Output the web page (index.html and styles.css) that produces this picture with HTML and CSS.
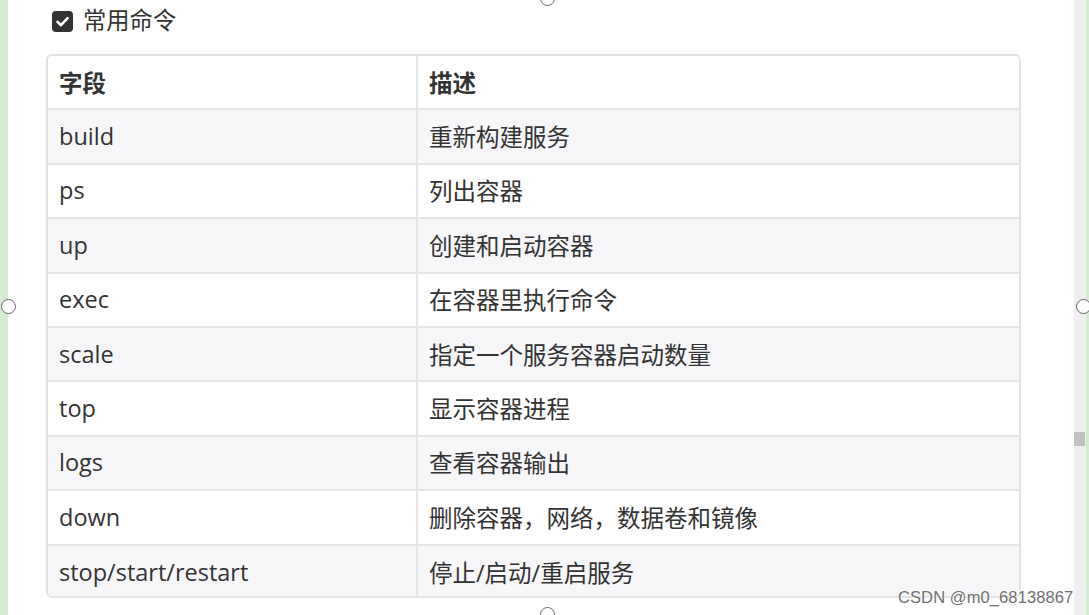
FILE: index.html
```html
<!DOCTYPE html>
<html lang="zh">
<head>
<meta charset="utf-8">
<link rel="stylesheet" href="styles.css">
</head>
<body>
<div class="frame">
  <div class="edge edge-left"></div>
  <main class="content">
    <div class="task">
      <span class="checkbox">
        <svg viewBox="0 0 21 21" width="21" height="21"><rect x="0" y="0" width="21" height="21" rx="4" fill="#333"/><path d="M5.5 10.8 L9 14.2 L15.6 7.2" fill="none" stroke="#fff" stroke-width="2.6" stroke-linecap="round" stroke-linejoin="round"/></svg>
      </span>
      <span class="task-label">常用命令</span>
    </div>
    <div class="table">
      <div class="cell head">字段</div><div class="cell head col2">描述</div>
      <div class="cell odd">build</div><div class="cell odd col2">重新构建服务</div>
      <div class="cell">ps</div><div class="cell col2">列出容器</div>
      <div class="cell odd">up</div><div class="cell odd col2">创建和启动容器</div>
      <div class="cell">exec</div><div class="cell col2">在容器里执行命令</div>
      <div class="cell odd">scale</div><div class="cell odd col2">指定一个服务容器启动数量</div>
      <div class="cell">top</div><div class="cell col2">显示容器进程</div>
      <div class="cell odd">logs</div><div class="cell odd col2">查看容器输出</div>
      <div class="cell">down</div><div class="cell col2">删除容器，网络，数据卷和镜像</div>
      <div class="cell odd last">stop/start/restart</div><div class="cell odd col2 last">停止/启动/重启服务</div>
    </div>
  </main>
  <div class="scrollbar"><div class="thumb"></div></div>
  <div class="edge edge-right"></div>
  <span class="handle h-top"></span>
  <span class="handle h-left"></span>
  <span class="handle h-right"></span>
  <span class="handle h-bottom"></span>
  <span class="mark">CSDN @m0_68138867</span>
</div>
</body>
</html>
```
FILE: styles.css
```css
html, body {
  margin: 0;
  padding: 0;
  background: #fff;
}
.frame {
  position: relative;
  width: 1089px;
  height: 615px;
  display: flex;
  overflow: hidden;
  font-family: "Open Sans", "Noto Sans CJK SC", sans-serif;
  color: #333;
}
.edge-left {
  width: 8px;
  background: #d3ebcf;
}
.edge-right {
  width: 3px;
  background: #d3ebcf;
}
.scrollbar {
  width: 12px;
  background: #efefef;
  position: relative;
}
.thumb {
  position: absolute;
  left: 0;
  top: 432px;
  width: 11px;
  height: 14px;
  background: #c1c1c1;
}
.content {
  flex: 1;
  padding-left: 38px;
  padding-right: 44px;
}
.task {
  height: 54px;
  display: flex;
  align-items: flex-start;
  padding-left: 6px;
  padding-top: 11px;
  box-sizing: border-box;
}
.checkbox {
  width: 21px;
  height: 21px;
  display: block;
}
.checkbox svg { display: block; }
.task-label {
  margin-left: 10px;
  margin-top: -2px;
  font-size: 23.3px;
  line-height: 21px;
  font-family: "Noto Sans CJK SC", sans-serif;
}
.table {
  display: grid;
  grid-template-columns: 368px 1fr;
  grid-auto-rows: 54.4px;
  border: 2px solid #e3e3e3;
  border-radius: 6px;
  overflow: hidden;
  box-sizing: border-box;
  width: 975px;
  height: 544px;
}
.cell {
  display: flex;
  align-items: center;
  padding-left: 11px;
  padding-bottom: 1px;
  font-size: 23.5px;
  border-bottom: 2px solid #e6e6e6;
  box-sizing: border-box;
  white-space: nowrap;
}
.cell.last { border-bottom: none; }
.col2 { border-left: 2px solid #e6e6e6; }
.head { font-weight: bold; background: #fff; }
.odd { background: #f7f7f9; }
.handle {
  position: absolute;
  width: 15px;
  height: 15px;
  border: 1.5px solid #666;
  border-radius: 50%;
  background: #fff;
  box-sizing: border-box;
}
.h-top { left: 540px; top: -9px; }
.h-bottom { left: 540px; top: 607px; }
.h-left { left: 1px; top: 299px; }
.h-right { left: 1076px; top: 299px; }
.mark {
  position: absolute;
  left: 898px;
  top: 588px;
  font-family: "Liberation Sans", sans-serif;
  font-size: 16.5px;
  color: #6f6f6f;
  text-shadow: 0 0 2px #fff, 0 0 2px #fff;
  letter-spacing: 0.1px;
}
```
